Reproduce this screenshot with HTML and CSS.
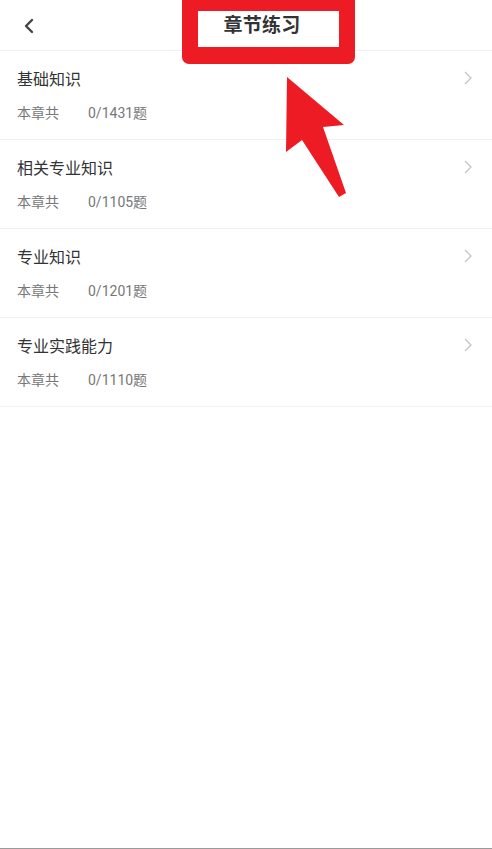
FILE: index.html
```html
<!DOCTYPE html>
<html lang="zh">
<head>
<meta charset="utf-8">
<link rel="stylesheet" href="styles.css">
</head>
<body>
<div class="page">
  <header class="header">
    <span class="back">
      <svg width="12" height="16" viewBox="0 0 12 16"><path d="M9 2 L3 8 L9 14" fill="none" stroke="#444" stroke-width="2.4" stroke-linecap="round" stroke-linejoin="round"/></svg>
    </span>
    <h1 class="title">章节练习</h1>
  </header>
  <ul class="list">
    <li class="item">
      <div class="item-main">
        <div class="item-title">基础知识</div>
        <div class="item-sub"><span class="sub-label">本章共</span><span class="sub-count">0/1431题</span></div>
      </div>
      <svg class="chev" width="10" height="16" viewBox="0 0 10 16"><path d="M2 2 L8 8 L2 14" fill="none" stroke="#c4c4c4" stroke-width="1.3"/></svg>
    </li>
    <li class="item">
      <div class="item-main">
        <div class="item-title">相关专业知识</div>
        <div class="item-sub"><span class="sub-label">本章共</span><span class="sub-count">0/1105题</span></div>
      </div>
      <svg class="chev" width="10" height="16" viewBox="0 0 10 16"><path d="M2 2 L8 8 L2 14" fill="none" stroke="#c4c4c4" stroke-width="1.3"/></svg>
    </li>
    <li class="item">
      <div class="item-main">
        <div class="item-title">专业知识</div>
        <div class="item-sub"><span class="sub-label">本章共</span><span class="sub-count">0/1201题</span></div>
      </div>
      <svg class="chev" width="10" height="16" viewBox="0 0 10 16"><path d="M2 2 L8 8 L2 14" fill="none" stroke="#c4c4c4" stroke-width="1.3"/></svg>
    </li>
    <li class="item">
      <div class="item-main">
        <div class="item-title">专业实践能力</div>
        <div class="item-sub"><span class="sub-label">本章共</span><span class="sub-count">0/1110题</span></div>
      </div>
      <svg class="chev" width="10" height="16" viewBox="0 0 10 16"><path d="M2 2 L8 8 L2 14" fill="none" stroke="#c4c4c4" stroke-width="1.3"/></svg>
    </li>
  </ul>
  <div class="highlight-box"></div>
  <svg class="arrow" width="70" height="125" viewBox="0 0 70 125">
    <polygon points="3,0 60,48 39,50 62,116 55,120 18,63 2,75" fill="#ed1c24"/>
  </svg>
</div>
</body>
</html>
```

FILE: styles.css
```css
* { box-sizing: border-box; }
html, body { margin: 0; padding: 0; }
body {
  background: #fff;
  font-family: Roboto, "Noto Sans CJK SC", "Noto Sans", sans-serif;
  color: #333;
}
.page {
  position: relative;
  min-height: 849px;
  border-bottom: 1px solid #9a9a9a;
}
.header {
  height: 51px;
  display: flex;
  align-items: center;
  border-bottom: 1px solid #f0f0f0;
  position: relative;
}
.back {
  display: flex;
  align-items: center;
  padding-left: 23px;
  margin-top: 1px;
  width: 40px;
}
.title {
  flex: 1;
  margin: 0;
  margin-top: -4px;
  padding-right: 8px;
  text-align: center;
  font-size: 19px;
  font-weight: 700;
  color: #333;
  letter-spacing: 0.3px;
}
.list { list-style: none; margin: 0; padding: 0; }
.item {
  height: 89px;
  display: flex;
  align-items: flex-start;
  justify-content: space-between;
  border-bottom: 1px solid #f0f0f0;
  padding: 0 19px 0 17px;
}
.item-main { display: flex; flex-direction: column; }
.item-title {
  font-size: 16px;
  line-height: 22px;
  margin-top: 18px;
  color: #333;
}
.item-sub {
  display: flex;
  font-size: 14px;
  line-height: 20px;
  margin-top: 12px;
  color: #777;
}
.sub-label { width: 71px; }
.chev { margin-top: 19px; }
.highlight-box {
  position: absolute;
  left: 182px;
  top: -6px;
  width: 173px;
  height: 70px;
  border: solid #ed1c24;
  border-width: 17px 16px 17px 16px;
  border-radius: 7px;
}
.arrow {
  position: absolute;
  left: 284px;
  top: 77px;
}
```
